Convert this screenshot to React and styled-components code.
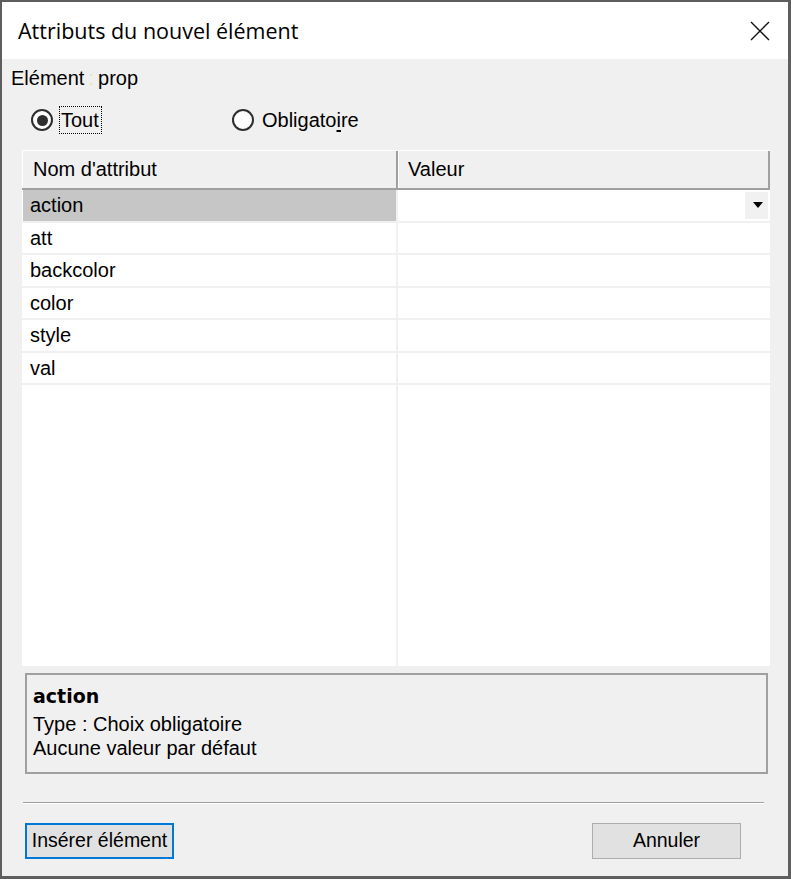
import React from "react";
import styled, { createGlobalStyle } from "styled-components";

const GlobalStyle = createGlobalStyle`
  html, body {
    margin: 0;
    padding: 0;
    background: #f0f0f0;
  }
  body {
    font-family: "Liberation Sans", Arial, sans-serif;
  }
  * {
    box-sizing: border-box;
  }
`;

const Window = styled.div`
  width: 791px;
  height: 879px;
  display: flex;
  flex-direction: column;
  border: 2px solid #5e5e5e;
  border-right-width: 3px;
  border-bottom-width: 3px;
  background: #f0f0f0;
  color: #000;
  font-family: "Liberation Sans", Arial, sans-serif;
  font-size: 20px;
`;

const TitleBar = styled.div`
  height: 57px;
  flex: none;
  display: flex;
  align-items: center;
  justify-content: space-between;
  padding: 0 18px 0 16px;
  background: #fff;
`;

const Title = styled.div`
  font-family: "Open Sans", "Noto Sans", sans-serif;
  font-size: 21.5px;
  line-height: 1;
  color: #000;
`;

const CloseButton = styled.div`
  width: 20px;
  height: 20px;
  display: flex;
  align-items: center;
  justify-content: center;
`;

const Content = styled.div`
  flex: 1;
  display: flex;
  flex-direction: column;
`;

const InfoLine = styled.div`
  margin: 8px 0 0 9px;
  height: 23px;
  line-height: 23px;
  white-space: pre;
  word-spacing: -1.5px;
`;

const FaintColon = styled.span`
  color: #efe4b8;
`;

const RadioRow = styled.div`
  margin-top: 16px;
  height: 28px;
  padding-left: 29px;
  display: grid;
  grid-template-columns: 201px auto;
  align-items: center;
`;

const Option = styled.label`
  display: flex;
  align-items: center;
  gap: 6px;
`;

const Circle = styled.span`
  width: 22px;
  height: 22px;
  border-radius: 50%;
  border: 2px solid #2e2e2e;
  background: #fff;
  display: grid;
  place-items: center;

  &::after {
    content: "";
    width: 11px;
    height: 11px;
    border-radius: 50%;
    background: ${(p) => (p.$checked ? "#2e2e2e" : "transparent")};
  }
`;

const OptionText = styled.span`
  line-height: 26px;
  padding: 0 2px 0 1px;
  border: 1px dotted ${(p) => (p.$focused ? "#000" : "transparent")};
`;

const Mnemonic = styled.span`
  text-decoration: underline;
  text-underline-offset: 3px;
`;

const Table = styled.div`
  margin: 16px 18px 0 20px;
  height: 516px;
  display: flex;
  flex-direction: column;
`;

const HeaderRow = styled.div`
  height: 40px;
  flex: none;
  display: grid;
  grid-template-columns: 376px 1fr;
  border-top: 1px solid #fff;
  border-bottom: 2px solid #a0a0a0;
`;

const HeaderCell = styled.div`
  display: flex;
  align-items: center;
  padding-left: ${(p) => (p.$first ? "10px" : "9px")};
  background: #f0f0f0;
  border-left: 1px solid #fff;
  border-right: 2px solid #a0a0a0;
`;

const Body = styled.div`
  flex: 1;
  display: flex;
  flex-direction: column;
  background: #fff;
`;

const Row = styled.div`
  height: 32.5px;
  flex: none;
  display: grid;
  grid-template-columns: 376px 1fr;
  border-bottom: 2px solid #f0f0f0;
`;

const NameCell = styled.div`
  display: flex;
  align-items: center;
  padding-left: 7px;
  margin-left: 1px;
  background: ${(p) => (p.$selected ? "#c6c6c6" : "#fff")};
  border-right: 2px solid #f0f0f0;
  line-height: 30px;
`;

const ValueCell = styled.div`
  display: flex;
  align-items: center;
  justify-content: flex-end;
  padding-right: 2px;
`;

const DropButton = styled.div`
  width: 23px;
  height: 27px;
  background: #f1f1f1;
  display: flex;
  align-items: center;
  justify-content: center;
  padding-left: 3px;
`;

const Filler = styled.div`
  flex: 1;
  display: grid;
  grid-template-columns: 376px 1fr;
`;

const FillerName = styled.div`
  border-right: 2px solid #f0f0f0;
`;

const DescBox = styled.div`
  margin: 7px 20px 0 23px;
  height: 101px;
  flex: none;
  border: 2px solid #a0a0a0;
  padding: 7px 0 0 6px;
`;

const DescName = styled.div`
  font-family: "DejaVu Sans", Verdana, sans-serif;
  font-weight: bold;
  font-size: 19px;
  line-height: 29.5px;
`;

const DescLine = styled.div`
  line-height: 24px;
`;

const Separator = styled.div`
  margin: 28px 24px 0 21px;
  height: 2px;
  flex: none;
  border-top: 1px solid #a0a0a0;
  border-bottom: 1px solid #fff;
`;

const ButtonRow = styled.div`
  margin-top: 19px;
  padding: 0 47px 0 23px;
  display: flex;
  justify-content: space-between;
`;

const Button = styled.button`
  width: 149px;
  height: 36px;
  margin: 0;
  padding: 0 0 2px;
  font-family: "Liberation Sans", Arial, sans-serif;
  font-size: 19.5px;
  color: #000;
  background: #e1e1e1;
  border: ${(p) => (p.$default ? "2px solid #0078d7" : "1px solid #adadad")};
  border-radius: 0;
`;

const attributes = ["action", "att", "backcolor", "color", "style", "val"];

export default function App() {
  return (
    <>
      <GlobalStyle />
      <Window>
        <TitleBar>
          <Title>Attributs du nouvel élément</Title>
          <CloseButton>
            <svg width="20" height="20" viewBox="0 0 20 20">
              <path d="M1 1 L19 19 M19 1 L1 19" stroke="#111" strokeWidth="1.4" fill="none" />
            </svg>
          </CloseButton>
        </TitleBar>
        <Content>
          <InfoLine>
            Elément <FaintColon>:</FaintColon> prop
          </InfoLine>
          <RadioRow>
            <Option>
              <Circle $checked />
              <OptionText $focused>Tout</OptionText>
            </Option>
            <Option>
              <Circle />
              <OptionText>
                Obligato<Mnemonic>i</Mnemonic>re
              </OptionText>
            </Option>
          </RadioRow>
          <Table>
            <HeaderRow>
              <HeaderCell $first>Nom d'attribut</HeaderCell>
              <HeaderCell>Valeur</HeaderCell>
            </HeaderRow>
            <Body>
              {attributes.map((name, i) => (
                <Row key={name}>
                  <NameCell $selected={i === 0}>{name}</NameCell>
                  <ValueCell>
                    {i === 0 && (
                      <DropButton>
                        <svg width="10" height="6" viewBox="0 0 10 6">
                          <path d="M0 0 H10 L5 6 Z" fill="#000" />
                        </svg>
                      </DropButton>
                    )}
                  </ValueCell>
                </Row>
              ))}
              <Filler>
                <FillerName />
                <div />
              </Filler>
            </Body>
          </Table>
          <DescBox>
            <DescName>action</DescName>
            <DescLine>Type : Choix obligatoire</DescLine>
            <DescLine>Aucune valeur par défaut</DescLine>
          </DescBox>
          <Separator />
          <ButtonRow>
            <Button $default>Insérer élément</Button>
            <Button>Annuler</Button>
          </ButtonRow>
        </Content>
      </Window>
    </>
  );
}
